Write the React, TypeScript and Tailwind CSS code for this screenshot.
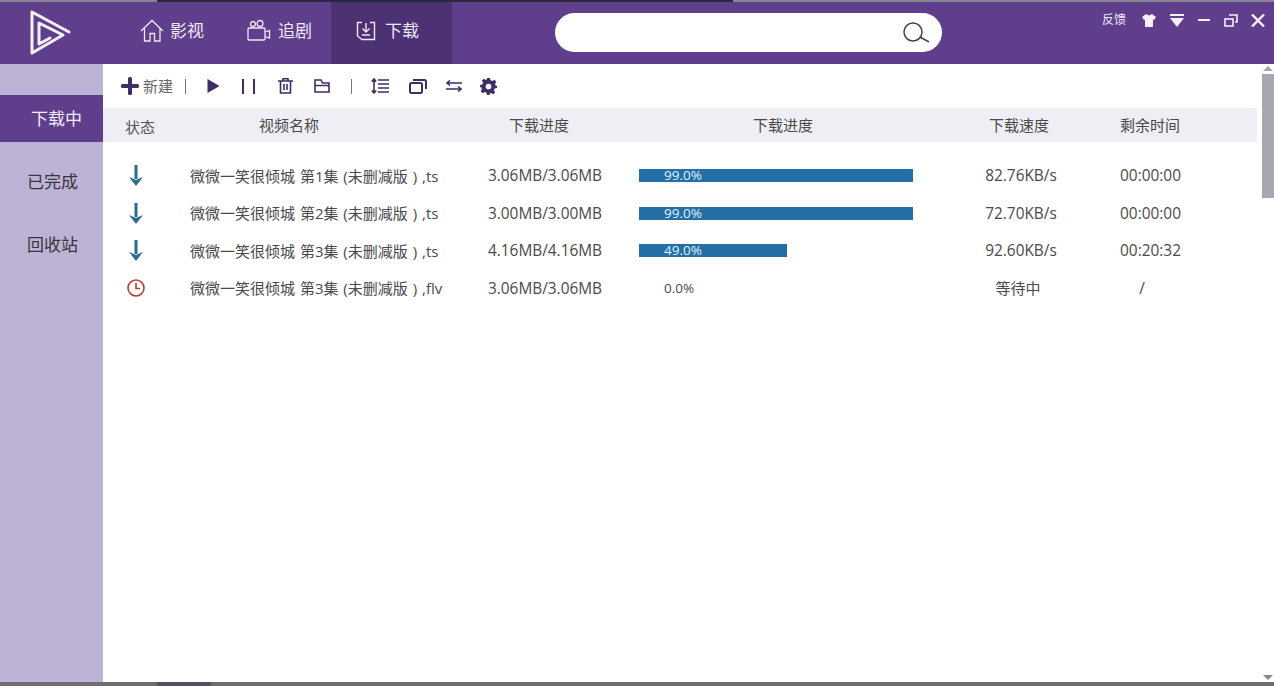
import React from 'react';

const rows = [
  { name: '微微一笑很倾城 第1集 (未删减版 ) ,ts', size: '3.06MB/3.06MB', pct: '99.0%', bar: 274, speed: '82.76KB/s', left: '00:00:00' },
  { name: '微微一笑很倾城 第2集 (未删减版 ) ,ts', size: '3.00MB/3.00MB', pct: '99.0%', bar: 274, speed: '72.70KB/s', left: '00:00:00' },
  { name: '微微一笑很倾城 第3集 (未删减版 ) ,ts', size: '4.16MB/4.16MB', pct: '49.0%', bar: 148, speed: '92.60KB/s', left: '00:20:32' },
  { name: '微微一笑很倾城 第3集 (未删减版 ) ,flv', size: '3.06MB/3.06MB', pct: '0.0%', bar: 0, speed: '等待中', left: '/' },
];

function Logo() {
  return (
    <svg width="44" height="48" viewBox="0 0 44 48" fill="none" stroke="#f4f0f8" strokeWidth="3" strokeLinecap="round" strokeLinejoin="round">
      <path d="M41 24 L4 4 V45 L35 27 L11 15 V36 L22 30" />
    </svg>
  );
}

function HomeIcon() {
  return (
    <svg width="24" height="24" viewBox="0 0 24 24" fill="none" stroke="#eee8f5" strokeWidth="1.3">
      <path d="M1 12 L12 1.5 L23 12 M4.500 9.500 V22 H10 V14.500 H14.500 V22 H20 V9.500" />
    </svg>
  );
}

function CameraIcon() {
  return (
    <svg width="24" height="24" viewBox="0 0 24 24" fill="none" stroke="#eee8f5" strokeWidth="1.3">
      <circle cx="6" cy="5" r="2.500" />
      <circle cx="13" cy="4.500" r="3" />
      <rect x="1" y="9" width="17" height="12" rx="1" />
      <path d="M18 13 L22.500 11.500 V19 L18 17.500" />
    </svg>
  );
}

function BoxIcon() {
  return (
    <svg width="20" height="20" viewBox="0 0 20 20" fill="none" stroke="#eee8f5" strokeWidth="1.4">
      <path d="M6 1.500 H1.500 V15 L6 18.500 H18.500 V1.500 H14" />
      <path d="M10 2 V10 M6.500 7.500 L10 11 L13.500 7.500 M6 14 H14" />
    </svg>
  );
}

function Toolbar() {
  const c = '#3f2d68';
  return (
    <div className="h-[44px] flex items-center pl-[18px] shrink-0">
      <svg width="18" height="18" viewBox="0 0 18 18" fill={c}><rect x="0" y="7" width="18" height="4" rx="1.500" /><rect x="7" y="0" width="4" height="18" rx="1.500" /></svg>
      <span className="ml-[4px] text-[15px] text-[#666] leading-none">新建</span>
      <div className="ml-[12px] w-px h-[15px] bg-[#777]" />
      <svg className="ml-[21px]" width="13" height="14" viewBox="0 0 13 14" fill={c}><path d="M0.500 0 L12.500 7 L0.500 14 Z" /></svg>
      <div className="ml-[22px] w-[2px] h-[15px] bg-[#3f2d68]" />
      <div className="ml-[9px] w-[2px] h-[15px] bg-[#3f2d68]" />
      <svg className="ml-[23px]" width="15" height="16" viewBox="0 0 15 16" fill="none" stroke={c} strokeWidth="1.600"><path d="M0 3 H15 M5 3 V0.800 H10 V3 M2.500 3 V15 H12.500 V3 M6 6 V12 M9 6 V12" /></svg>
      <svg className="ml-[21px]" width="16" height="14" viewBox="0 0 16 14" fill="none" stroke={c} strokeWidth="1.600"><path d="M1 13 V1 H7 L8.500 4 H15 V13 Z M1 6.500 H15" /></svg>
      <div className="ml-[21px] w-px h-[15px] bg-[#777]" />
      <svg className="ml-[19px]" width="18" height="16" viewBox="0 0 18 16" fill="none" stroke={c} strokeWidth="1.600"><path d="M3 1 V15 M0.800 3.500 L3 1 L5.200 3.500 M0.800 12.500 L3 15 L5.200 12.500 M7 2 H18 M7 6 H18 M7 10 H18 M7 14 H18" /></svg>
      <svg className="ml-[20px]" width="18" height="15" viewBox="0 0 18 15" fill="none" stroke={c} strokeWidth="2"><rect x="1" y="4" width="12" height="10" rx="1.500" /><path d="M4 1 H15.500 Q17 1 17 2.500 V10" /></svg>
      <svg className="ml-[19px]" width="16" height="12" viewBox="0 0 16 12" fill="none" stroke={c} strokeWidth="1.500"><path d="M16 3 H1 M4 0.500 L1 3 L4 5.500 M0 9 H15 M12 6.500 L15 9 L12 11.500" /></svg>
      <svg className="ml-[18px]" width="17" height="17" viewBox="0 0 24 24" fill={c}><path fillRule="evenodd" d="M10 0 H14 L14.800 3.300 L17.400 4.400 L20.300 2.600 L23 5.400 L21.200 8.300 L22.200 10.800 L24 11 V14 L20.800 14.800 L19.700 17.400 L21.400 20.300 L18.600 23 L15.700 21.200 L14 22 L13.500 24 H10 L9.200 20.800 L6.600 19.700 L3.700 21.400 L1 18.600 L2.800 15.700 L1.800 13.200 L0 13 V10 L3.200 9.200 L4.300 6.600 L2.600 3.700 L5.400 1 L8.300 2.800 L9.600 2.200 Z M12 8 A4 4 0 1 0 12 16 A4 4 0 1 0 12 8 Z" /></svg>
    </div>
  );
}

export default function App() {
  return (
    <div className="w-[1274px] h-[686px] overflow-hidden flex flex-col bg-white text-[#4a4a4a] font-['Open_Sans','Noto_Sans_CJK_SC',sans-serif]">
      <div className="h-[2px] shrink-0 flex bg-[#8a8490]">
        <div className="ml-[157px] w-[576px] bg-[#2c2740]" />
      </div>

      {/* top bar */}
      <header className="h-[62px] shrink-0 bg-[#5f3f8c] flex items-center text-[#eee8f5]">
        <div className="w-[140px] pl-[28px] shrink-0 mb-[2px]"><Logo /></div>
        <div className="flex items-center gap-[6px] w-[107px] shrink-0 mb-[4px]"><HomeIcon /><span className="text-[17px]">影视</span></div>
        <div className="flex items-center gap-[7px] w-[84px] shrink-0 mb-[4px]"><CameraIcon /><span className="text-[17px]">追剧</span></div>
        <div className="w-[121px] h-full shrink-0 bg-[#4c3273] flex items-center pl-[25px] gap-[9px] pb-[4px]"><BoxIcon /><span className="text-[17px]">下载</span></div>
        <div className="ml-[103px] w-[387px] h-[39px] mb-[1px] rounded-full bg-white flex items-center justify-end pr-[12px] shrink-0">
          <svg width="28" height="22" viewBox="0 0 28 22" fill="none" stroke="#444" strokeWidth="1.500"><circle cx="11" cy="10" r="9" /><path d="M18 15 L27 20" /></svg>
        </div>
        <div className="ml-[160px] self-start mt-[9px] flex items-center">
          <span className="text-[12px]">反馈</span>
          <svg className="ml-[16px]" width="14" height="13" viewBox="0 0 14 13" fill="#f4f0f8"><path d="M4 0 L7 1.500 L10 0 L14 3 L12 6 L11 5.500 V13 H3 V5.500 L2 6 L0 3 Z" /></svg>
          <svg className="ml-[14px]" width="14" height="13" viewBox="0 0 14 13" fill="#f4f0f8"><rect width="14" height="2" /><path d="M0 4 H14 L7 13 Z" /></svg>
          <div className="ml-[14px] w-[12px] h-[2px] bg-[#f4f0f8]" />
          <svg className="ml-[14px]" width="14" height="13" viewBox="0 0 14 13" fill="none" stroke="#f4f0f8" strokeWidth="1.600"><rect x="1" y="5" width="8" height="7" /><path d="M5 1 H13 V8 H11" /></svg>
          <svg className="ml-[13px]" width="14" height="13" viewBox="0 0 14 13" fill="none" stroke="#f4f0f8" strokeWidth="2.400"><path d="M1 0.500 L13 12.500 M13 0.500 L1 12.500" /></svg>
        </div>
      </header>

      <div className="flex-1 flex min-h-0">
        {/* left menu */}
        <aside className="w-[103px] shrink-0 bg-[#bdb3d4] pt-[31px] text-[17px] text-[#3a3340]">
          <div className="h-[47px] bg-[#5f3f8c] text-[#f1ecf7] flex items-center pl-[31px]">下载中</div>
          <div className="h-[63px] pt-[16px] pl-[27px] leading-[48px]">已完成</div>
          <div className="h-[63px] pl-[27px] leading-[80px]">回收站</div>
        </aside>

        <main className="w-[1154px] shrink-0 flex flex-col">
          <Toolbar />
          <div className="h-[34px] shrink-0 bg-[#f0eef5] grid grid-cols-[74px_224px_276px_283px_120px_140px] items-center text-[15px] text-center">
            <div className="mt-[4px] text-[#555]">状态</div>
            <div>视频名称</div>
            <div>下载进度</div>
            <div className="pr-[71px]">下载进度</div>
            <div className="pr-[2px]">下载速度</div>
            <div>剩余时间</div>
          </div>
          <div className="pt-[15px]">
            {rows.map((r, i) => (
              <div key={i} className="h-[37.5px] grid grid-cols-[87px_280px_150px_19px_321px_122px_140px] items-center text-[15.400px]">
                <div className={r.bar > 0 ? 'pl-[26px]' : 'pl-[23px]'}>
                  {r.bar > 0 ? (
                    <svg width="14" height="21" viewBox="0 0 14 21" fill="#2b6c8c"><rect x="5.500" y="0" width="3" height="14" /><path d="M0 12 L7 21 L14 12 L7 15 Z" /></svg>
                  ) : (
                    <svg width="20" height="20" viewBox="0 0 20 20" fill="none" stroke="#b5403a" strokeWidth="1.600"><circle cx="10" cy="10" r="8" /><path d="M10 5 V10.500 H14" /></svg>
                  )}
                </div>
                <div className="whitespace-nowrap text-[15px] [word-spacing:1px]">{r.name}</div>
                <div className="text-center whitespace-nowrap">{r.size}</div>
                <div />
                <div className="relative h-[13px]">
                  {r.bar > 0 && <div className="h-full bg-[#2470a6]" style={{ width: r.bar }} />}
                  <span className={`absolute left-[25px] top-0 text-[13.500px] leading-[13px] ${r.bar > 0 ? 'text-[#dff1fb]' : 'text-[#4a4a4a]'}`}>{r.pct}</span>
                </div>
                <div className={r.bar > 0 ? 'text-center' : 'text-center text-[15px] pr-[6px]'}>{r.speed}</div>
                <div className={r.bar > 0 ? 'text-center pr-[3px]' : 'text-center pr-[20px]'}>{r.left}</div>
              </div>
            ))}
          </div>
        </main>

        {/* scrollbar */}
        <div className="ml-[5px] w-[12px] shrink-0 flex flex-col items-center">
          <div className="mt-[2px] w-0 h-0 border-x-[5px] border-x-transparent border-b-[5px] border-b-[#a8a6b0]" />
          <div className="mt-[3px] w-full h-[124px] bg-[#a8a6b0]" />
          <div className="mt-auto mb-[2px] w-0 h-0 border-x-[5px] border-x-transparent border-t-[5px] border-t-[#888]" />
        </div>
      </div>

      <div className="h-[4px] shrink-0 bg-[#6f6d70] flex">
        <div className="ml-[157px] w-[54px] bg-[#55505f]" />
      </div>
    </div>
  );
}
